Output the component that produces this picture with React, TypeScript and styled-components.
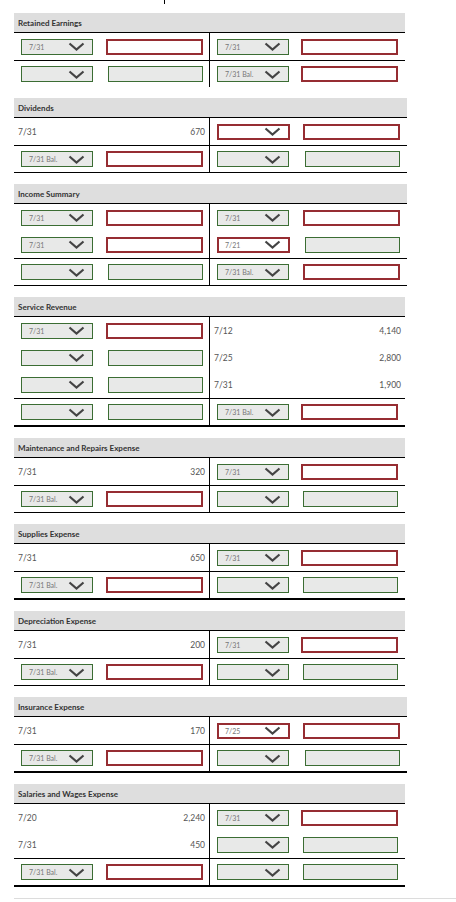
import styled, { createGlobalStyle } from "styled-components";

type Mark = "ok" | "bad";

type Side =
  | { kind: "pick"; date: string; dateMark: Mark; amountMark: Mark }
  | { kind: "posted"; date: string; amount: string };

type Row = { left: Side; right: Side };

type Account = {
  title: string;
  width: number;
  rule: "none" | "thin" | "thick";
  entries: Row[];
  balance: Row;
};

const pick = (date: string, dateMark: Mark, amountMark: Mark): Side => ({
  kind: "pick",
  date,
  dateMark,
  amountMark,
});

const posted = (date: string, amount: string): Side => ({ kind: "posted", date, amount });

const ACCOUNTS: Account[] = [
  {
    title: "Retained Earnings",
    width: 391,
    rule: "none",
    entries: [{ left: pick("7/31", "ok", "bad"), right: pick("7/31", "ok", "bad") }],
    balance: { left: pick("", "ok", "ok"), right: pick("7/31 Bal.", "ok", "bad") },
  },
  {
    title: "Dividends",
    width: 393,
    rule: "thin",
    entries: [{ left: posted("7/31", "670"), right: pick("", "bad", "bad") }],
    balance: { left: pick("7/31 Bal.", "ok", "bad"), right: pick("", "ok", "ok") },
  },
  {
    title: "Income Summary",
    width: 393,
    rule: "thin",
    entries: [
      { left: pick("7/31", "ok", "bad"), right: pick("7/31", "ok", "bad") },
      { left: pick("7/31", "ok", "bad"), right: pick("7/21", "bad", "ok") },
    ],
    balance: { left: pick("", "ok", "ok"), right: pick("7/31 Bal.", "ok", "bad") },
  },
  {
    title: "Service Revenue",
    width: 391,
    rule: "thick",
    entries: [
      { left: pick("7/31", "ok", "bad"), right: posted("7/12", "4,140") },
      { left: pick("", "ok", "ok"), right: posted("7/25", "2,800") },
      { left: pick("", "ok", "ok"), right: posted("7/31", "1,900") },
    ],
    balance: { left: pick("", "ok", "ok"), right: pick("7/31 Bal.", "ok", "bad") },
  },
  {
    title: "Maintenance and Repairs Expense",
    width: 391,
    rule: "thin",
    entries: [{ left: posted("7/31", "320"), right: pick("7/31", "ok", "bad") }],
    balance: { left: pick("7/31 Bal.", "ok", "bad"), right: pick("", "ok", "ok") },
  },
  {
    title: "Supplies Expense",
    width: 391,
    rule: "thick",
    entries: [{ left: posted("7/31", "650"), right: pick("7/31", "ok", "bad") }],
    balance: { left: pick("7/31 Bal.", "ok", "bad"), right: pick("", "ok", "ok") },
  },
  {
    title: "Depreciation Expense",
    width: 391,
    rule: "thin",
    entries: [{ left: posted("7/31", "200"), right: pick("7/31", "ok", "bad") }],
    balance: { left: pick("7/31 Bal.", "ok", "bad"), right: pick("", "ok", "ok") },
  },
  {
    title: "Insurance Expense",
    width: 393,
    rule: "thick",
    entries: [{ left: posted("7/31", "170"), right: pick("7/25", "bad", "bad") }],
    balance: { left: pick("7/31 Bal.", "ok", "bad"), right: pick("", "ok", "ok") },
  },
  {
    title: "Salaries and Wages Expense",
    width: 391,
    rule: "thick",
    entries: [
      { left: posted("7/20", "2,240"), right: pick("7/31", "ok", "bad") },
      { left: posted("7/31", "450"), right: pick("", "ok", "ok") },
    ],
    balance: { left: pick("7/31 Bal.", "ok", "bad"), right: pick("", "ok", "ok") },
  },
];

const GREEN = "#3b6d33";
const RED = "#962d32";

const GlobalStyle = createGlobalStyle`
  body {
    margin: 0;
    background: #fff;
    font-family: Lato, "Liberation Sans", sans-serif;
  }
`;

const Page = styled.div`
  width: 456px;
  padding-left: 14px;
  box-sizing: border-box;
`;

const Tick = styled.div`
  width: 1px;
  height: 4px;
  background: #000;
  margin: 0 0 9px 150px;
`;

const RULES = { none: "none", thin: "1px solid #000", thick: "2px solid #000" };

const TAccount = styled.section<{ $width: number; $rule: Account["rule"] }>`
  width: ${(p) => p.$width}px;
  margin-bottom: 11px;
  border-bottom: ${(p) => RULES[p.$rule]};
`;

const Title = styled.h3`
  margin: 0;
  height: 19px;
  padding-left: 4px;
  display: flex;
  align-items: center;
  background: #dedede;
  border-bottom: 1px solid #000;
  font-size: 8px;
  font-weight: 700;
  color: #333;
`;

const Line = styled.div<{ $total?: boolean }>`
  display: grid;
  grid-template-columns: 196px 1fr;
  height: ${(p) => (p.$total ? 26 : 27)}px;
  border-top: ${(p) => (p.$total ? "1px solid #000" : "none")};
`;

const Cell = styled.div<{ $left?: boolean; $posted?: boolean }>`
  box-sizing: border-box;
  display: flex;
  align-items: center;
  justify-content: space-between;
  padding: ${(p) => (p.$posted ? "0 4px" : p.$left ? "0 6px 0 7px" : "0 7px")};
  border-right: ${(p) => (p.$left ? "1px solid #000" : "none")};
  font-size: 8.5px;
  color: #555;
`;

const DateSelect = styled.div<{ $bad?: boolean }>`
  box-sizing: border-box;
  width: ${(p) => (p.$bad ? 73 : 72)}px;
  height: 16px;
  display: flex;
  align-items: center;
  justify-content: space-between;
  padding: 0 7px 0 ${(p) => (p.$bad ? 6 : 7)}px;
  border: ${(p) => (p.$bad ? `2px solid ${RED}` : `1px solid ${GREEN}`)};
  background: ${(p) => (p.$bad ? "#fff" : "#e8e9e8")};
  font-size: 7px;
  color: #777;
  white-space: nowrap;
`;

const AmountBox = styled.div<{ $bad?: boolean }>`
  box-sizing: border-box;
  width: ${(p) => (p.$bad ? 97 : 95)}px;
  height: 16px;
  border: ${(p) => (p.$bad ? `2px solid ${RED}` : `1px solid ${GREEN}`)};
  background: ${(p) => (p.$bad ? "#fff" : "#e8e9e8")};
`;

const Footer = styled.div`
  width: 442px;
  height: 1px;
  margin-top: 4px;
  background: #dcdcdc;
`;

function Chevron() {
  return (
    <svg width="17" height="9" viewBox="0 0 17 9" style={{ flexShrink: 0 }}>
      <polyline points="1.5,1.5 8.5,7.5 15.5,1.5" fill="none" stroke="#444" strokeWidth="2.2" />
    </svg>
  );
}

function SideCell({ side, left }: { side: Side; left?: boolean }) {
  if (side.kind === "posted") {
    return (
      <Cell $left={left} $posted>
        <span>{side.date}</span>
        <span>{side.amount}</span>
      </Cell>
    );
  }
  return (
    <Cell $left={left}>
      <DateSelect $bad={side.dateMark === "bad"}>
        <span>{side.date}</span>
        <Chevron />
      </DateSelect>
      <AmountBox $bad={side.amountMark === "bad"} />
    </Cell>
  );
}

function AccountCard({ account }: { account: Account }) {
  return (
    <TAccount $width={account.width} $rule={account.rule}>
      <Title>{account.title}</Title>
      {account.entries.map((row, i) => (
        <Line key={i}>
          <SideCell side={row.left} left />
          <SideCell side={row.right} />
        </Line>
      ))}
      <Line $total>
        <SideCell side={account.balance.left} left />
        <SideCell side={account.balance.right} />
      </Line>
    </TAccount>
  );
}

export default function App() {
  return (
    <>
      <GlobalStyle />
      <Page>
        <Tick />
        {ACCOUNTS.map((a) => (
          <AccountCard key={a.title} account={a} />
        ))}
        <Footer />
      </Page>
    </>
  );
}
